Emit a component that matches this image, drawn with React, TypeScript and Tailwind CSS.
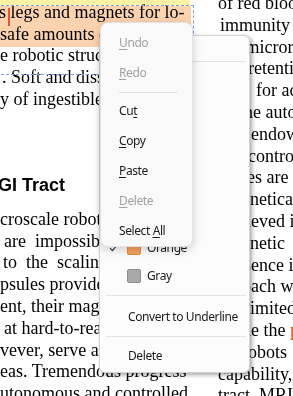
import React from 'react';

const serif = "font-['Liberation_Serif',serif]";
const ui = "font-['Noto_Sans',sans-serif] tracking-[-0.4px]";

// Left column: clipped page text above the heading
const leftTop = [
  { text: 'tion of a pill display by way of', cls: 'pl-[2px]' },
  { text: 's legs and magnets for lo-', cls: '-ml-px' },
  { text: 'safe amounts of medicine', cls: '' },
  { text: 'e robotic structures', cls: '' },
  { text: '. Soft and dissolvable', cls: 'pl-[2px]' },
  { text: 'y of ingestible robots', cls: '' },
];

const leftBody = [
  { text: 'croscale robots', cls: '' },
  { text: 'are  impossible', cls: 'pl-[4px]' },
  { text: 'to  the  scaling', cls: 'pl-[3px]' },
  { text: 'psules provide', cls: '' },
  { text: 'ent, their magnetic', cls: '' },
  { text: 'at hard-to-reach', cls: 'pl-[4px]' },
  { text: 'vever, serve as', cls: '' },
  { text: 'eas. Tremendous progress', cls: '' },
  { text: 'utonomous and controlled', cls: '' },
];

const rightLines = [
  { text: 'of red blood', cls: '' },
  { text: 'immunity', cls: 'pl-[2px]' },
  { text: 'the microrobots', cls: 'pl-px' },
  { text: 'retention', cls: 'pl-[30px]' },
  { text: 'for active', cls: 'pl-[38px]' },
  { text: 'the autonomous', cls: 'pl-[21px]' },
  { text: 'endowed', cls: 'pl-[33px]' },
  { text: 'control', cls: 'pl-[30px]' },
  { text: 'cases are', cls: 'pl-[6px]' },
  { text: 'magnetically', cls: 'pl-px' },
  { text: 'achieved in', cls: 'pl-[3px]' },
  { text: 'magnetic', cls: 'pl-px' },
  { text: 'presence in', cls: 'pl-[3px]' },
  { text: 'proach with', cls: 'pl-[9px]' },
  { text: 'limited', cls: 'pl-[27px]' },
  { text: 'made the ', cls: 'pl-[2px]', tail: 'pill' },
  { text: 'robots', cls: 'pl-[24px]' },
  { text: 'capability,', cls: '' },
  { text: 'tract. MRI', cls: '' },
];

const colors = [
  { name: 'Yellow', swatch: 'bg-[#ffe45c] border-[#d9bd3a]' },
  { name: 'Green', swatch: 'bg-[#7ed67e] border-[#5bb05b]' },
  { name: 'Blue', swatch: 'bg-[#7ab8f5] border-[#5a96d4]' },
  { name: 'Pink', swatch: 'bg-[#f5a3c7] border-[#d681a5]' },
  { name: 'Red', swatch: 'bg-[#f07a7a] border-[#cf5757]' },
  { name: 'Purple', swatch: 'bg-[#b99cf0] border-[#987bd0]' },
  { name: 'Orange', swatch: 'bg-[#f5a35a] border-[#dc8a40]', checked: true },
  { name: 'Gray', swatch: 'bg-[#a9a9a9] border-[#8e8e8e]' },
];

function Check() {
  return (
    <svg width="9" height="8" viewBox="0 0 9 8" fill="none">
      <polyline points="1,4.2 3.4,6.6 8,1.2" stroke="#3a3a3a" strokeWidth="1.2" />
    </svg>
  );
}

function EditItem({ label, keyIndex, disabled }: { label: string; keyIndex: number; disabled?: boolean }) {
  return (
    <div
      className={`flex h-[30px] items-center pl-[18px] text-[12px] ${disabled ? 'text-[#a2a2a2]' : 'text-[#1b1b1b]'}`}
    >
      <span className="whitespace-pre">
        {label.slice(0, keyIndex)}
        <u className="underline-offset-2">{label[keyIndex]}</u>
        {label.slice(keyIndex + 1)}
      </span>
    </div>
  );
}

function HighlightMenu() {
  return (
    <div
      className={`absolute left-[99px] top-[35px] flex h-[338px] w-[151px] flex-col rounded-[6px] border border-[#d4d4d4] bg-[#fcfcfc] text-[12px] text-[#1b1b1b] shadow-[2px_2px_4px_rgba(0,0,0,0.35)] ${ui}`}
    >
      <div className="flex h-[21px] items-center pl-[29px]">Copy Text</div>
      <div className="flex h-[9px] items-center">
        <div className="ml-[6px] mr-[3px] h-px flex-1 bg-[#e2e2e2]" />
      </div>
      {colors.map((c) => (
        <div key={c.name} className="flex h-[28px] items-center">
          <div className="flex w-[27px] justify-center">{c.checked && <Check />}</div>
          <div className={`h-[14px] w-[14px] rounded-[2px] border ${c.swatch}`} />
          <span className="ml-[6px]">{c.name}</span>
        </div>
      ))}
      <div className="flex h-[11px] items-center">
        <div className="ml-[6px] mr-[3px] h-px flex-1 bg-[#e2e2e2]" />
      </div>
      <div className="flex h-[31px] items-center pl-[28px]">Convert to Underline</div>
      <div className="flex h-[8px] items-center">
        <div className="ml-[6px] mr-[3px] h-px flex-1 bg-[#e2e2e2]" />
      </div>
      <div className="flex h-[32px] items-center pl-[28px]">Delete</div>
    </div>
  );
}

function EditMenu() {
  return (
    <div
      className={`absolute left-[100px] top-[22px] h-[225px] w-[93px] rounded-[8px] border border-[#e3e3e3] bg-[#f9f9f9] pt-[5px] shadow-[0_3px_10px_rgba(0,0,0,0.18)] ${ui}`}
    >
      <EditItem label="Undo" keyIndex={0} disabled />
      <EditItem label="Redo" keyIndex={0} disabled />
      <div className="flex h-[8px] items-center">
        <div className="ml-[18px] h-px w-[59px] bg-[#e0e0e0]" />
      </div>
      <EditItem label="Cut" keyIndex={2} />
      <EditItem label="Copy" keyIndex={0} />
      <EditItem label="Paste" keyIndex={0} />
      <EditItem label="Delete" keyIndex={0} disabled />
      <EditItem label="Select All" keyIndex={7} />
    </div>
  );
}

export default function App() {
  return (
    <div className={`relative h-[396px] w-[293px] overflow-hidden bg-white text-[18px] text-black ${serif}`}>
      <div className="flex items-start">
        <div className="w-[218px] shrink-0 overflow-hidden">
          <div className="-mt-[20px] leading-[21.8px]">
            {leftTop.map((l, i) => (
              <div key={i} className={`whitespace-pre ${l.cls}`}>
                {l.text}
              </div>
            ))}
          </div>
          <h2 className="-ml-[2px] mt-[62px] whitespace-pre font-['Liberation_Sans',sans-serif] text-[18px] font-bold leading-[24px]">
            GI Tract
          </h2>
          <div className="mt-[12px] leading-[21.8px]">
            {leftBody.map((l, i) => (
              <div key={i} className={`whitespace-pre ${l.cls}`}>
                {l.text}
              </div>
            ))}
          </div>
        </div>
        <div className="-mt-[7px] min-w-0 flex-1 leading-[21.8px]">
          {rightLines.map((l, i) => (
            <div key={i} className={`whitespace-pre ${l.cls}`}>
              {l.text}
              {l.tail && <span className="text-[#c2571a]">{l.tail}</span>}
            </div>
          ))}
        </div>
      </div>

      {/* highlight annotations over the first lines */}
      <div className="absolute left-0 top-[-14px] h-[19px] w-[190px] bg-[#fff1a3] mix-blend-multiply" />
      <div className="absolute left-0 top-[6px] h-[21px] w-[191px] bg-[#fcd2af] mix-blend-multiply" />
      <div className="absolute left-0 top-[27px] h-[20px] w-[190px] bg-[#fcd2af] mix-blend-multiply" />
      <div className="absolute left-[-4px] top-[5px] h-[70px] w-[198px] border-[1.5px] border-dashed border-[#7f9fe3]" />
      <div className="absolute left-[8px] top-[8px] h-[18px] w-[2px] bg-[#e4572e]" />

      <HighlightMenu />
      <EditMenu />
    </div>
  );
}
